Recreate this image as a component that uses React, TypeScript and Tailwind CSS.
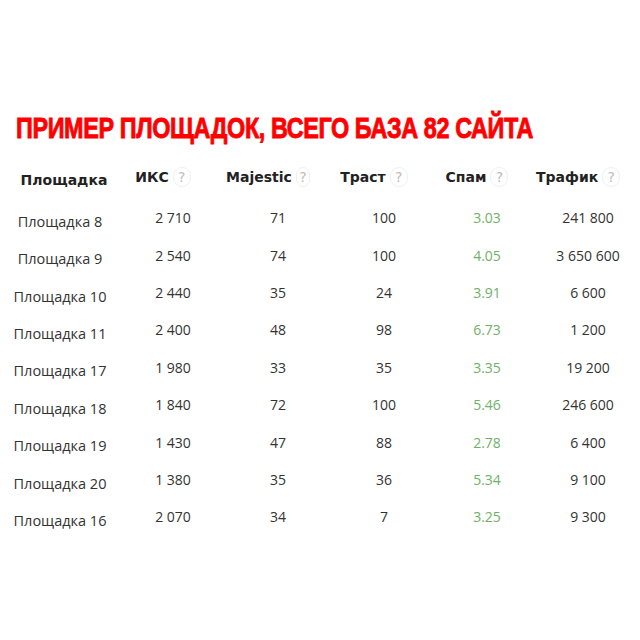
const rows = [
  ["Площадка 8", "2 710", "71", "100", "3.03", "241 800"],
  ["Площадка 9", "2 540", "74", "100", "4.05", "3 650 600"],
  ["Площадка 10", "2 440", "35", "24", "3.91", "6 600"],
  ["Площадка 11", "2 400", "48", "98", "6.73", "1 200"],
  ["Площадка 17", "1 980", "33", "35", "3.35", "19 200"],
  ["Площадка 18", "1 840", "72", "100", "5.46", "246 600"],
  ["Площадка 19", "1 430", "47", "88", "2.78", "6 400"],
  ["Площадка 20", "1 380", "35", "36", "5.34", "9 100"],
  ["Площадка 16", "2 070", "34", "7", "3.25", "9 300"],
];

const cols = "grid grid-cols-[120px_106px_104px_108px_98px_104px]";

function Help() {
  return (
    <span className="ml-1 inline-flex h-[20px] w-[18px] items-center justify-center rounded-full border border-[#f0f0f0] text-[14px] font-normal leading-none text-[#bdbdbd]">
      ?
    </span>
  );
}

function Head({ label }: { label: string }) {
  return (
    <div className="flex items-center justify-center pr-5">
      <span>{label}</span>
      <Help />
    </div>
  );
}

export default function App() {
  return (
    <div className="h-[640px] w-[640px] bg-white pt-[113px] text-[#333] font-['Open_Sans',sans-serif]">
      <h1 className="ml-[16px] w-max origin-left scale-x-[0.78] text-[30px] font-bold leading-[30px] tracking-[-0.5px] text-[#f00] [-webkit-text-stroke:0.9px_#f00] font-['Liberation_Sans',sans-serif]">
        ПРИМЕР ПЛОЩАДОК, ВСЕГО БАЗА 82 САЙТА
      </h1>
      <div className={`${cols} mt-[16px] h-[36px] items-center text-[14px] font-bold text-[#222] font-['DejaVu_Sans',sans-serif]`}>
        <div className="mt-[7px] pl-2 text-center">Площадка</div>
        <Head label="ИКС" />
        <Head label="Majestic" />
        <Head label="Траст" />
        <Head label="Спам" />
        <Head label="Трафик" />
      </div>
      <div className="mt-[4px]">
        {rows.map((r) => (
          <div key={r[0]} className={`${cols} h-[37.4px] items-center text-[14px]`}>
            <div className="mt-[8px] text-center text-[14.5px]">{r[0]}</div>
            <div className="text-center">{r[1]}</div>
            <div className="text-center">{r[2]}</div>
            <div className="text-center">{r[3]}</div>
            <div className="text-center text-[#70b168]">{r[4]}</div>
            <div className="text-center">{r[5]}</div>
          </div>
        ))}
      </div>
    </div>
  );
}
